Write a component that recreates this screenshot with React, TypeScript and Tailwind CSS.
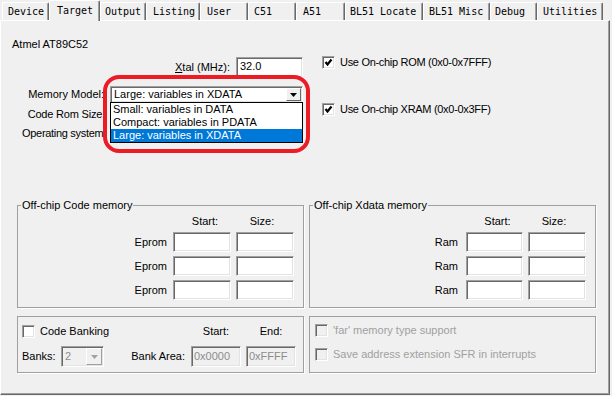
import type { ReactNode } from 'react';

const tabs = [
  { label: 'Device', cls: 'w-[47px] pl-[5px]' },
  { label: 'Target', cls: 'w-[51px] pl-[7px]', active: true },
  { label: 'Output', cls: 'w-[46px] pl-[4px]' },
  { label: 'Listing', cls: 'w-[54px] pl-[6px]' },
  { label: 'User', cls: 'w-[48px] pl-[6px]' },
  { label: 'C51', cls: 'w-[48px] pl-[5px]' },
  { label: 'A51', cls: 'w-[49px] pl-[6px]' },
  { label: 'BL51 Locate', cls: 'w-[78px] pl-[4px]' },
  { label: 'BL51 Misc', cls: 'w-[67px] pl-[5px]' },
  { label: 'Debug', cls: 'w-[47px] pl-[4px]' },
  { label: 'Utilities', cls: 'w-[66px] pl-[5px]' },
];

const sunken =
  'border border-t-[#a0a0a0] border-l-[#a0a0a0] border-b-white border-r-white shadow-[inset_1px_1px_0_#696969,inset_-1px_-1px_0_#e3e3e3]';

function Check({ checked, disabled }: { checked?: boolean; disabled?: boolean }) {
  return (
    <div
      className={`w-[13px] h-[13px] shrink-0 flex items-center justify-center ${sunken} ${
        disabled ? 'bg-[#f0f0f0]' : 'bg-white'
      }`}
    >
      {checked && (
        <svg width="9" height="9" viewBox="0 0 9 9">
          <polyline points="1.5,4 3.5,6.5 7.5,1.5" fill="none" stroke="#000" strokeWidth="2.2" />
        </svg>
      )}
    </div>
  );
}

function Box({ className, children }: { className: string; children?: ReactNode }) {
  return <div className={`${sunken} bg-white ${className}`}>{children}</div>;
}

function Group({ title, className, children }: { title?: string; className: string; children?: ReactNode }) {
  return (
    <div className={`relative border border-[#a0a0a0] shadow-[1px_1px_0_#fff] ${className}`}>
      {title && (
        <span className="absolute -top-[7px] left-[3px] px-[1px] bg-[#f0f0f0] leading-[13px]">{title}</span>
      )}
      {children}
    </div>
  );
}

function MemGroup({ title, label, cols, pr }: { title: string; label: string; cols: string; pr: string }) {
  return (
    <Group title={title} className="w-[287px] h-[103px]">
      <div className={`grid ${cols} gap-x-[5px] gap-y-[4px] mt-[9px]`}>
        <span />
        <span className="h-[13px] leading-[13px] text-center pl-[6px]">Start:</span>
        <span className="h-[13px] leading-[13px] text-center pr-[6px]">Size:</span>
        {[0, 1, 2].map(i => (
          <div key={i} className="contents">
            <span className={`h-[20px] leading-[20px] text-right ${pr}`}>{label}</span>
            <Box className="h-[20px]" />
            <Box className="h-[20px]" />
          </div>
        ))}
      </div>
    </Group>
  );
}

export default function App() {
  return (
    <div className="relative w-[612px] h-[396px] overflow-hidden bg-[#f0f0f0] text-[11px] text-black font-['Liberation_Sans',Arial,sans-serif]">
      <div className="flex items-start h-[20px] pl-[2px] font-['DejaVu_Sans_Mono',monospace] text-[10px]">
        {tabs.map(t => (
          <div
            key={t.label}
            className={`${t.cls} shrink-0 border-l border-t border-white border-r border-r-[#696969] shadow-[inset_-1px_0_0_#a0a0a0] rounded-t-[2px] whitespace-pre ${
              t.active
                ? 'relative z-10 h-[21px] bg-[#f0f0f0] leading-[19px]'
                : 'h-[18px] mt-[2px] leading-[17px]'
            }`}
          >
            {t.label}
          </div>
        ))}
      </div>

      <div className="w-[610px] h-[375px] border-l border-t border-white border-r border-b border-r-[#696969] border-b-[#696969] shadow-[inset_-1px_-1px_0_#a0a0a0]">
        <div className="mt-[17px] h-[13px] leading-[13px] pl-[11px]">Atmel AT89C52</div>

        <div className="flex items-start mt-[5px]">
          <div className="w-[302px] flex flex-col">
            <div className="flex items-center h-[21px] mt-[1px]">
              <span className="w-[229px] text-right">
                <span className="underline">X</span>tal (MHz):
              </span>
              <Box className="ml-[6px] w-[67px] h-[21px] pl-[3px] leading-[17px]">32.0</Box>
            </div>
            <div className="flex items-center h-[17px] mt-[8px]">
              <span className="w-[103px] text-right">Memory Model:</span>
              <Box className="ml-[6px] w-[193px] h-[17px] flex items-center justify-between pl-[3px] pr-[1px]">
                <span>Large: variables in XDATA</span>
                <span className="w-[15px] h-[13px] bg-[#f0f0f0] border border-t-white border-l-white border-b-[#696969] border-r-[#696969] flex items-center justify-center">
                  <svg width="7" height="4" viewBox="0 0 7 4">
                    <polygon points="0,0 7,0 3.5,4" fill="#000" />
                  </svg>
                </span>
              </Box>
            </div>
            <div className="flex items-center h-[16px] mt-[3px]">
              <span className="w-[104px] text-right tracking-[-0.2px]">Code Rom Size:</span>
            </div>
            <div className="flex items-center h-[16px] mt-[3px] pl-[21px] tracking-[-0.3px]">Operating system</div>
          </div>

          <div className="ml-[19px] flex flex-col tracking-[-0.3px]">
            <div className="flex items-center h-[13px]">
              <Check checked />
              <span className="ml-[5px]">Use On-chip ROM (0x0-0x7FFF)</span>
            </div>
            <div className="flex items-center h-[13px] mt-[34px]">
              <Check checked />
              <span className="ml-[5px]">Use On-chip XRAM (0x0-0x3FF)</span>
            </div>
          </div>
        </div>

        <div className="flex mt-[64px] pl-[16px] gap-[5px]">
          <MemGroup title="Off-chip Code memory" label="Eprom" cols="grid-cols-[150px_58px_58px]" pr="pr-[1px]" />
          <MemGroup title="Off-chip Xdata memory" label="Ram" cols="grid-cols-[151px_57px_58px]" pr="pr-[3px]" />
        </div>

        <div className="flex mt-[8px] pl-[16px] gap-[5px]">
          <Group className="w-[287px] h-[57px]">
            <div className="flex items-center h-[13px] mt-[8px]">
              <div className="w-[173px] flex items-center pl-[4px]">
                <Check />
                <span className="ml-[5px]">Code Banking</span>
              </div>
              <span className="w-[50px] text-center">Start:</span>
              <span className="w-[50px] ml-[5px] text-center">End:</span>
            </div>
            <div className="flex items-center h-[21px] mt-[8px]">
              <div className="w-[173px] flex items-center pl-[4px]">
                <span className="w-[39px]">Banks:</span>
                <div className={`w-[43px] h-[21px] bg-[#f0f0f0] flex items-center justify-between pl-[3px] pr-[1px] text-[#8c8c8c] ${sunken}`}>
                  <span>2</span>
                  <span className="w-[16px] h-[17px] bg-[#f0f0f0] border border-t-white border-l-white border-b-[#a0a0a0] border-r-[#a0a0a0] flex items-center justify-center">
                    <svg width="7" height="4" viewBox="0 0 7 4">
                      <polygon points="0,0 7,0 3.5,4" fill="#a0a0a0" />
                    </svg>
                  </span>
                </div>
                <span className="flex-1 text-right pr-[6px]">Bank Area:</span>
              </div>
              <div className={`w-[50px] h-[21px] bg-[#f0f0f0] pl-[2px] leading-[19px] text-[#8c8c8c] ${sunken}`}>0x0000</div>
              <div className={`w-[50px] h-[21px] ml-[5px] bg-[#f0f0f0] pl-[2px] leading-[19px] text-[#8c8c8c] ${sunken}`}>0xFFFF</div>
            </div>
          </Group>

          <Group className="w-[287px] h-[57px] text-[#a0a0a0]">
            <div className="flex items-center h-[13px] mt-[7px] pl-[5px]">
              <Check disabled />
              <span className="ml-[5px]">'far' memory type support</span>
            </div>
            <div className="flex items-center h-[13px] mt-[11px] pl-[5px]">
              <Check disabled />
              <span className="ml-[5px]">Save address extension SFR in interrupts</span>
            </div>
          </Group>
        </div>
      </div>

      {/* open dropdown list of the memory model combo */}
      <div className="absolute left-[110px] top-[102px] w-[193px] h-[41px] bg-white border border-black">
        <div className="h-[13px] leading-[13px] pl-[2px]">Small: variables in DATA</div>
        <div className="h-[13px] leading-[13px] pl-[2px]">Compact: variables in PDATA</div>
        <div className="h-[13px] leading-[13px] pl-[2px] bg-[#0078d7] text-white">Large: variables in XDATA</div>
      </div>

      {/* red annotation */}
      <div className="absolute left-[103px] top-[75px] w-[207px] h-[78px] border-[4px] border-[#ed1c24] rounded-[16px]" />
    </div>
  );
}
